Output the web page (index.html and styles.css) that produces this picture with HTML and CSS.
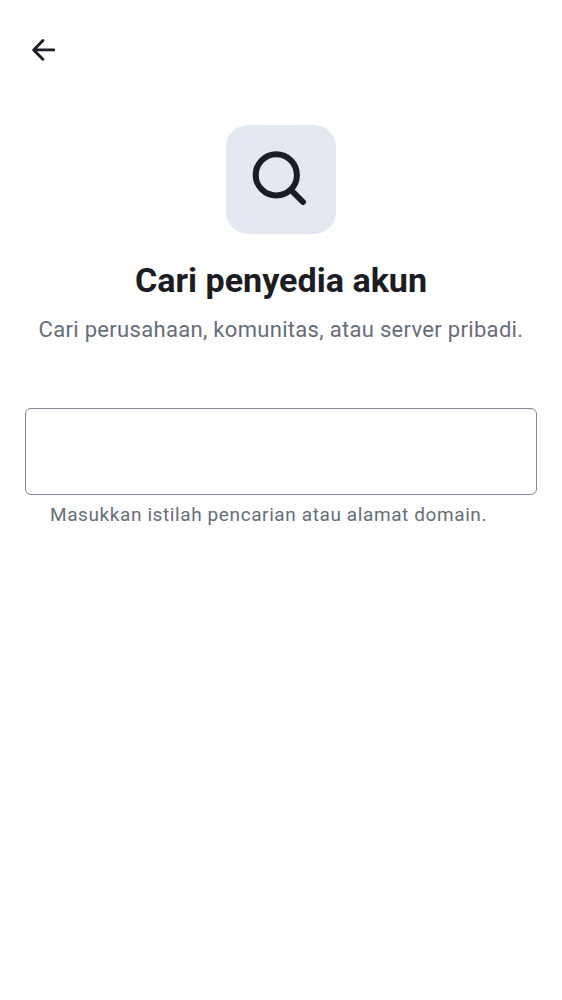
FILE: index.html
```html
<!DOCTYPE html>
<html lang="id">
<head>
<meta charset="utf-8">
<title>Cari penyedia akun</title>
<link rel="stylesheet" href="styles.css">
</head>
<body>
<header class="topbar">
<svg class="back" viewBox="0 0 24 24" role="img" aria-label="Kembali"><path d="M22.7 11.900H3M11.900 2.600L2.700 11.900l9.200 9.300"/></svg>
</header>
<main class="content">
<div class="tile"><svg class="search" viewBox="0 0 56 56"><circle cx="24.300" cy="23.900" r="20.600"/><path d="M39 39L51 51"/></svg></div>
<h1 class="title">Cari penyedia akun</h1>
<p class="subtitle">Cari perusahaan, komunitas, atau server pribadi.</p>
<input class="field" type="text" aria-label="Pencarian">
<p class="hint">Masukkan istilah pencarian atau alamat domain.</p>
</main>
</body>
</html>
```
FILE: styles.css
```css
* { box-sizing: border-box; margin: 0; }
body { background: #fff; font-family: Roboto, sans-serif; color: #1b1d22; }
.topbar { height: 125px; padding: 38px 0 0 31px; }
.back { display: block; width: 24px; height: 24px; fill: none; stroke: #1b1d22; stroke-width: 2.900; stroke-linecap: round; stroke-linejoin: round; }
.content { display: flex; flex-direction: column; align-items: center; padding: 0 25px; }
.tile { width: 110px; height: 109px; border-radius: 22px; background: #e3e8f1; padding: 26px 0 0 26px; }
.search { display: block; width: 56px; height: 56px; fill: none; stroke: #1b1d22; stroke-width: 6; stroke-linecap: round; }
.title { margin-top: 24px; font-size: 34.1px; line-height: 44px; font-weight: 700; white-space: nowrap; }
.subtitle { margin-top: 13px; font-size: 22px; line-height: 30px; letter-spacing: 0.31px; color: #656e79; white-space: nowrap; }
.field { margin-top: 63px; width: 512px; height: 87px; border: 1.500px solid #7f8896; border-radius: 6px; background: #fff; padding: 0 24px; outline: 0; }
.hint { align-self: flex-start; margin: 7px 0 0 25px; font-size: 19px; line-height: 26px; letter-spacing: 0.6px; color: #656e79; white-space: nowrap; }
```
